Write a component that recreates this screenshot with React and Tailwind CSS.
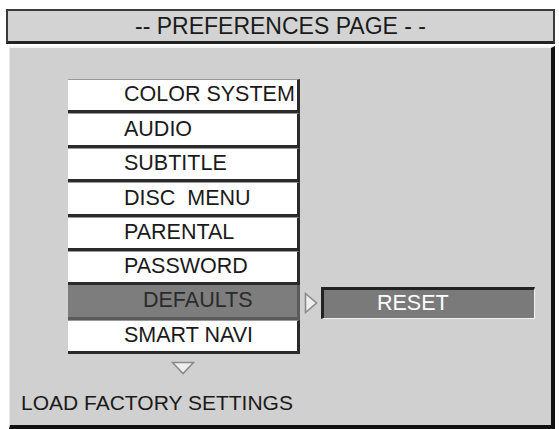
import React from 'react';

const items = ['COLOR SYSTEM', 'AUDIO', 'SUBTITLE', 'DISC\u00a0\u00a0MENU', 'PARENTAL', 'PASSWORD', 'DEFAULTS', 'SMART NAVI'];

const App = () => {
  return (
    <div className="w-[559px] h-[429px] bg-white overflow-hidden flex flex-col text-[#1a1a1a]" style={{ fontFamily: '"Liberation Sans", Arial, sans-serif' }}>
      {/* title bar */}
      <div className="ml-[6px] mr-[4px] mt-[9px] h-[35px] shrink-0 bg-[#d3d3d3] border-2 border-[#3a3a3a] border-b-[3px] border-b-[#222] flex items-center justify-center text-[23px] leading-none">
        -- PREFERENCES PAGE - -
      </div>

      {/* body panel */}
      <div className="ml-[9px] mr-[4px] mt-[2px] h-[383px] shrink-0 bg-[#d0d0d0] border-t-2 border-t-[#f4f4f4] border-l border-l-[#e8e8e8] border-r-4 border-r-[#111] border-b-4 border-b-[#111] flex flex-col">
        <div className="mt-[31px] flex flex-col">
          {items.map((label) => {
            const active = label === 'DEFAULTS';
            return (
              <div key={label} className="flex items-center h-[34.4px]">
                <div
                  className={
                    active
                      ? 'ml-[58px] w-[232px] h-full bg-[#7d7d7d] border-r-[3px] border-b-[3px] border-[#5a5a5a] flex items-center pl-[75px] text-[21.5px] leading-none whitespace-nowrap text-[#2b2b2b]'
                      : 'ml-[58px] w-[232px] h-full bg-white border-t border-t-[#9a9a9a] border-r-[3px] border-b-[3px] border-r-[#2a2a2a] border-b-[#2a2a2a] flex items-center pl-[56px] text-[21.5px] leading-none whitespace-nowrap overflow-hidden'
                  }
                >
                  {label}
                </div>
                {active && (
                  <>
                    <svg width="14" height="22" viewBox="0 0 14 22" className="ml-[4px]">
                      <path d="M1.5 1.5 L12.5 11 L1.5 20.5 Z" fill="#eeeeee" stroke="#8a8a8a" strokeWidth="1.6" />
                    </svg>
                    <div className="ml-[3px] w-[214px] h-[32px] bg-[#7a7a7a] border-t-[3px] border-l-[3px] border-[#222] border-r border-b border-r-[#f2f2f2] border-b-[#f2f2f2] flex items-center pl-[53px] text-[21.5px] leading-none text-white">
                      RESET
                    </div>
                  </>
                )}
              </div>
            );
          })}
          <div className="ml-[161px] mt-[7px]">
            <svg width="24" height="14" viewBox="0 0 24 14">
              <path d="M1.5 1.5 L22.5 1.5 L12 12.5 Z" fill="#eeeeee" stroke="#8a8a8a" strokeWidth="1.6" />
            </svg>
          </div>
        </div>
        <div className="ml-[11px] mt-[17px] text-[21px] leading-none">LOAD FACTORY SETTINGS</div>
      </div>
    </div>
  );
};

export default App;
